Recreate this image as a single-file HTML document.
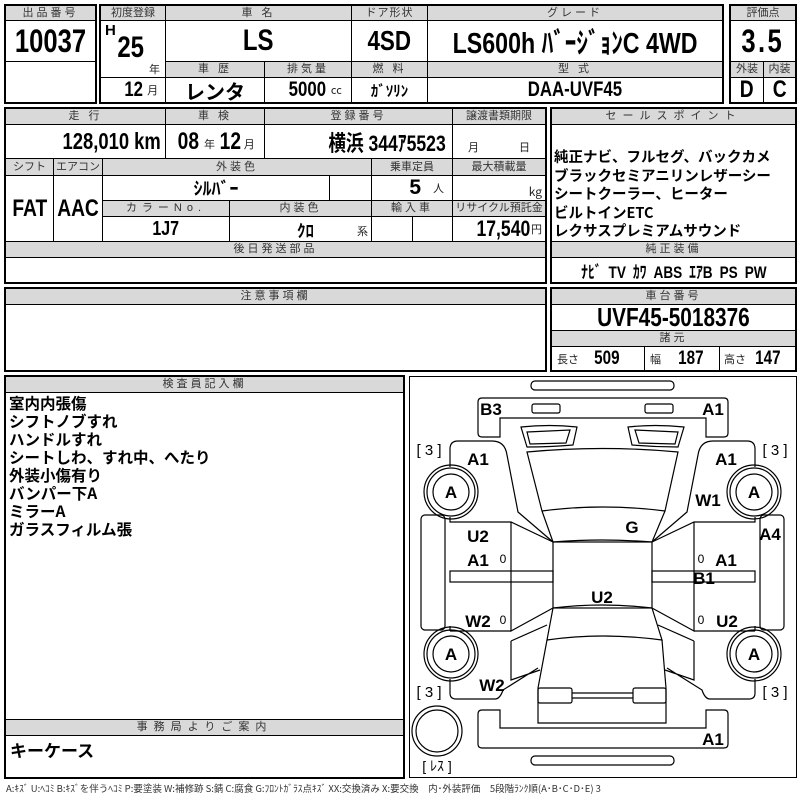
<!DOCTYPE html>
<html><head><meta charset="utf-8">
<style>
*{margin:0;padding:0;box-sizing:border-box}
body{width:800px;height:800px;background:#fff;position:relative;overflow:hidden;font-family:"Liberation Sans","Noto Sans CJK JP",sans-serif;color:#000}
.c{position:absolute;border:1px solid #000;display:flex;align-items:center;justify-content:center;white-space:nowrap;overflow:hidden}
.h{background:#d9d9d9;font-size:11px;color:#333;letter-spacing:3px;line-height:1}
.o{position:absolute;border:2px solid #000}
.b{font-family:"Liberation Sans Narrow","Liberation Sans","Noto Sans CJK JP",sans-serif;font-weight:bold}
.n{display:inline-block;transform:scaleX(.8)}
.r{transform-origin:right center}
.s{font-size:11px;font-weight:normal;color:#222;font-family:"Noto Sans CJK JP",sans-serif}
.t{position:absolute;white-space:nowrap}
</style></head><body>
<!-- Box 1 -->
<div class="c h" style="left:5px;top:5px;width:91px;height:16px">出品番号</div>
<div class="c b" style="left:5px;top:20px;width:91px;height:42px;font-size:32px"><span class="n">10037</span></div>
<div class="c" style="left:5px;top:61px;width:91px;height:42px"></div>
<div class="o" style="left:4px;top:4px;width:93px;height:100px"></div>

<!-- Box 2 -->
<div class="c h" style="left:100px;top:5px;width:66px;height:16px;letter-spacing:0">初度登録</div>
<div class="c h" style="left:165px;top:5px;width:187px;height:16px">車 名</div>
<div class="c h" style="left:351px;top:5px;width:77px;height:16px;letter-spacing:1px">ドア形状</div>
<div class="c h" style="left:427px;top:5px;width:296px;height:16px">グレード</div>
<div class="c" style="left:100px;top:20px;width:66px;height:58px"></div>
<div class="t b" style="left:105px;top:22px;font-size:15px">H</div>
<div class="t b" style="left:114px;top:31px;font-size:30px"><span class="n">25</span></div>
<div class="t s" style="left:149px;top:61px">年</div>
<div class="c b" style="left:165px;top:20px;width:187px;height:42px;font-size:30px"><span class="n">LS</span></div>
<div class="c b" style="left:351px;top:20px;width:77px;height:42px;font-size:28px"><span class="n">4SD</span></div>
<div class="c b" style="left:427px;top:20px;width:296px;height:42px;font-size:29px"><span class="n">LS600h ﾊﾞｰｼﾞｮﾝC 4WD</span></div>
<div class="c h" style="left:165px;top:61px;width:100px;height:17px">車 歴</div>
<div class="c h" style="left:264px;top:61px;width:88px;height:17px">排気量</div>
<div class="c h" style="left:351px;top:61px;width:77px;height:17px">燃 料</div>
<div class="c h" style="left:427px;top:61px;width:296px;height:17px">型 式</div>
<div class="c" style="left:100px;top:77px;width:66px;height:26px"><span class="b" style="font-size:21px;margin-left:14px"><span class="n">12</span></span><span class="s" style="margin-left:2px">月</span></div>
<div class="c b" style="left:165px;top:77px;width:100px;height:26px;font-size:20px">レンタ</div>
<div class="c" style="left:264px;top:77px;width:88px;height:26px"><span class="b" style="font-size:21px;margin-left:10px"><span class="n">5000</span></span><span class="s" style="margin-left:0">cc</span></div>
<div class="c b" style="left:351px;top:77px;width:77px;height:26px;font-size:15px">ｶﾞｿﾘﾝ</div>
<div class="c b" style="left:427px;top:77px;width:296px;height:26px;font-size:21px"><span class="n">DAA-UVF45</span></div>
<div class="o" style="left:99px;top:4px;width:625px;height:100px"></div>

<!-- Box 3 -->
<div class="c h" style="left:730px;top:5px;width:66px;height:16px;letter-spacing:0">評価点</div>
<div class="c b" style="left:730px;top:20px;width:66px;height:42px;font-size:32px"><span class="n" style="letter-spacing:3px">3.5</span></div>
<div class="c h" style="left:730px;top:61px;width:34px;height:17px;letter-spacing:0">外装</div>
<div class="c h" style="left:763px;top:61px;width:33px;height:17px;letter-spacing:0">内装</div>
<div class="c b" style="left:730px;top:77px;width:34px;height:26px;font-size:24px"><span class="n">D</span></div>
<div class="c b" style="left:763px;top:77px;width:33px;height:26px;font-size:24px"><span class="n">C</span></div>
<div class="o" style="left:729px;top:4px;width:68px;height:100px"></div>

<!-- Section 2 left -->
<div class="c h" style="left:5px;top:108px;width:161px;height:17px">走 行</div>
<div class="c h" style="left:165px;top:108px;width:100px;height:17px">車 検</div>
<div class="c h" style="left:264px;top:108px;width:189px;height:17px">登録番号</div>
<div class="c h" style="left:452px;top:108px;width:94px;height:17px;letter-spacing:0">譲渡書類期限</div>
<div class="c" style="left:5px;top:124px;width:161px;height:35px;justify-content:flex-end;padding-right:4px"><span class="b n r" style="font-size:23px">128,010 km</span></div>
<div class="c" style="left:165px;top:124px;width:100px;height:35px"><span class="b n" style="font-size:24px">08</span><span class="s" style="margin:4px 2px 0">年</span><span class="b n" style="font-size:24px">12</span><span class="s" style="margin-top:4px">月</span></div>
<div class="c" style="left:264px;top:124px;width:189px;height:35px;justify-content:flex-end;padding-right:6px"><span class="b n r" style="font-size:22px">横浜 344ｱ5523</span></div>
<div class="c" style="left:452px;top:124px;width:94px;height:35px;align-items:flex-end;padding-bottom:3px"><span class="s" style="margin-right:40px">月</span><span class="s">日</span></div>
<div class="c h" style="left:5px;top:158px;width:49px;height:18px;letter-spacing:0">シフト</div>
<div class="c h" style="left:53px;top:158px;width:50px;height:18px;letter-spacing:0">エアコン</div>
<div class="c h" style="left:102px;top:158px;width:270px;height:18px">外装色</div>
<div class="c h" style="left:371px;top:158px;width:82px;height:18px;letter-spacing:0">乗車定員</div>
<div class="c h" style="left:452px;top:158px;width:94px;height:18px;letter-spacing:0">最大積載量</div>
<div class="c b" style="left:5px;top:175px;width:49px;height:67px;font-size:24px"><span class="n">FAT</span></div>
<div class="c b" style="left:53px;top:175px;width:50px;height:67px;font-size:24px"><span class="n">AAC</span></div>
<div class="c b" style="left:102px;top:175px;width:228px;height:26px;font-size:18px">ｼﾙﾊﾞｰ</div>
<div class="c" style="left:329px;top:175px;width:43px;height:26px"></div>
<div class="c" style="left:371px;top:175px;width:82px;height:26px;justify-content:flex-end;padding-right:8px"><span class="b" style="font-size:21px">5</span><span class="s" style="margin-left:12px">人</span></div>
<div class="c" style="left:452px;top:175px;width:94px;height:26px;justify-content:flex-end;padding-right:3px;align-items:flex-end"><span class="s" style="font-size:12px">kg</span></div>
<div class="c h" style="left:102px;top:200px;width:128px;height:17px;letter-spacing:5px">カラーNo.</div>
<div class="c h" style="left:229px;top:200px;width:143px;height:17px">内装色</div>
<div class="c h" style="left:371px;top:200px;width:82px;height:17px">輸入車</div>
<div class="c h" style="left:452px;top:200px;width:94px;height:17px;letter-spacing:0">リサイクル預託金</div>
<div class="c b" style="left:102px;top:216px;width:128px;height:26px;font-size:20px"><span class="n">1J7</span></div>
<div class="c" style="left:229px;top:216px;width:143px;height:26px"><span class="b" style="font-size:17px;margin-left:10px">ｸﾛ</span><span class="t s" style="right:3px;bottom:2px">系</span></div>
<div class="c" style="left:371px;top:216px;width:42px;height:26px"></div>
<div class="c" style="left:412px;top:216px;width:41px;height:26px"></div>
<div class="c" style="left:452px;top:216px;width:94px;height:26px;justify-content:flex-end;padding-right:3px"><span class="b n r" style="font-size:22px">17,540</span><span class="s" style="margin-left:1px">円</span></div>
<div class="c h" style="left:5px;top:241px;width:541px;height:17px">後日発送部品</div>
<div class="c" style="left:5px;top:257px;width:541px;height:26px"></div>
<div class="o" style="left:4px;top:107px;width:543px;height:177px"></div>

<!-- Sales point -->
<div class="c h" style="left:551px;top:108px;width:245px;height:17px;letter-spacing:6px">セールスポイント</div>
<div class="c" style="left:551px;top:124px;width:245px;height:118px;display:block;padding:23px 0 0 2px;font-size:14.5px;font-weight:bold;line-height:18.5px;font-family:'Noto Sans CJK JP',sans-serif">純正ナビ、フルセグ、バックカメ<br>ブラックセミアニリンレザーシー<br>シートクーラー、ヒーター<br>ビルトインETC<br>レクサスプレミアムサウンド</div>
<div class="c h" style="left:551px;top:241px;width:245px;height:17px">純正装備</div>
<div class="c b" style="left:551px;top:257px;width:245px;height:26px;font-size:17px;word-spacing:4px"><span class="n">ﾅﾋﾞ TV ｶﾜ ABS ｴｱB PS PW</span></div>
<div class="o" style="left:550px;top:107px;width:247px;height:177px"></div>

<!-- Section 3 -->
<div class="c h" style="left:5px;top:288px;width:541px;height:17px">注意事項欄</div>
<div class="c" style="left:5px;top:304px;width:541px;height:67px"></div>
<div class="o" style="left:4px;top:287px;width:543px;height:85px"></div>

<div class="c h" style="left:551px;top:288px;width:245px;height:17px">車台番号</div>
<div class="c b" style="left:551px;top:304px;width:245px;height:27px;font-size:26px"><span class="n">UVF45-5018376</span></div>
<div class="c h" style="left:551px;top:330px;width:245px;height:17px">諸元</div>
<div class="c" style="left:551px;top:346px;width:94px;height:25px;justify-content:flex-start;padding-left:5px"><span class="s">長さ</span><span class="b n" style="font-size:19px;margin-left:12px">509</span></div>
<div class="c" style="left:644px;top:346px;width:76px;height:25px;justify-content:flex-start;padding-left:5px"><span class="s">幅</span><span class="b n" style="font-size:19px;margin-left:14px">187</span></div>
<div class="c" style="left:719px;top:346px;width:77px;height:25px;justify-content:flex-start;padding-left:4px"><span class="s">高さ</span><span class="b n" style="font-size:19px;margin-left:6px">147</span></div>
<div class="o" style="left:550px;top:287px;width:247px;height:85px"></div>

<!-- Inspector box -->
<div class="c h" style="left:5px;top:376px;width:399px;height:17px">検査員記入欄</div>
<div class="c" style="left:5px;top:392px;width:399px;height:328px;display:block;padding:1px 0 0 3px;font-size:15.5px;font-weight:bold;line-height:18px;font-family:'Noto Sans CJK JP',sans-serif">室内内張傷<br>シフトノブすれ<br>ハンドルすれ<br>シートしわ、すれ中、へたり<br>外装小傷有り<br>バンパー下A<br>ミラーA<br>ガラスフィルム張</div>
<div class="c h" style="left:5px;top:719px;width:399px;height:17px;letter-spacing:6px">事務局よりご案内</div>
<div class="c" style="left:5px;top:735px;width:399px;height:43px;display:block;padding:1px 0 0 4px;font-size:17px;font-weight:bold;font-family:'Noto Sans CJK JP',sans-serif">キーケース</div>
<div class="o" style="left:4px;top:375px;width:401px;height:404px"></div>

<!-- Diagram -->
<div class="o" style="left:409px;top:376px;width:388px;height:402px;border-width:1px"></div>
<svg style="position:absolute;left:0;top:0" width="800" height="800" viewBox="0 0 800 800" fill="none" stroke="#000" stroke-width="1.2">
<rect x="531" y="381" width="143" height="9" rx="4"/>
<rect x="531" y="756" width="143" height="9" rx="4"/>
<path d="M482,398 L724,398 Q728,398 728,402 L728,433 Q728,437 724,437 L706,437 L706,418 L500,418 L500,437 L482,437 Q478,437 478,433 L478,402 Q478,398 482,398Z"/>
<rect x="532" y="404" width="28" height="9" rx="2"/>
<rect x="645" y="404" width="28" height="9" rx="2"/>
<path d="M482,748 L724,748 Q728,748 728,744 L728,714 Q728,710 724,710 L706,710 L706,728 L500,728 L500,710 L482,710 Q478,710 478,714 L478,744 Q478,748 482,748Z"/>
<path d="M521,427 Q550,424 577,427 L573,445 Q550,447 527,447 Z M527,432 L570,430 L566,443 L530,444 Z"/>
<path d="M684,427 Q655,424 628,427 L632,445 Q655,447 678,447 Z M678,432 L635,430 L639,443 L675,444 Z"/>
<path d="M527,452 Q602,445 678,452 L665,511 Q602,503 542,511 Z"/>
<path d="M542,511 L553,542 Q602,538 652,542 L665,511"/>
<rect x="553" y="542" width="99" height="66"/>
<path d="M553,608 Q602,602 652,608 L662,640 Q602,632 547,640 Z"/>
<path d="M547,640 L538,688 L538,723 L666,723 L666,688 L662,640"/>
<rect x="538" y="688" width="34" height="15" rx="2"/>
<rect x="633" y="688" width="33" height="15" rx="2"/>
<path d="M572,693 L633,693 M572,698 L633,698"/>
<path d="M553,542 L518,512 L507,455 Q505,441 492,441 L458,441 Q450,441 450,449 L450,467"/>
<path d="M450,517 L450,522 L511,522 L553,542 M511,522 L511,631 L553,608 M450,631 L511,631 M450,626 L450,631"/>
<rect x="450" y="571" width="103" height="11"/>
<rect x="421" y="515" width="24" height="115" rx="4"/>
<path d="M450,679 L450,693 Q450,699 456,699 L495,699 Q500,699 503,690 L538,668 M511,641 L511,680 L540,670 M511,641 L547,625"/>
<path d="M652,542 L687,512 L698,455 Q700,441 713,441 L747,441 Q755,441 755,449 L755,467"/>
<path d="M755,517 L755,522 L694,522 L652,542 M694,522 L694,631 L652,608 M755,631 L694,631 M755,626 L755,631"/>
<rect x="652" y="571" width="103" height="11"/>
<rect x="760" y="515" width="24" height="115" rx="4"/>
<path d="M755,679 L755,693 Q755,699 749,699 L710,699 Q705,699 702,690 L667,668 M694,641 L694,680 L665,670 M694,641 L658,625"/>
<g><circle cx="451" cy="492" r="27"/><circle cx="451" cy="492" r="24"/><circle cx="451" cy="492" r="18"/></g>
<g><circle cx="754" cy="492" r="27"/><circle cx="754" cy="492" r="24"/><circle cx="754" cy="492" r="18"/></g>
<g><circle cx="451" cy="654" r="27"/><circle cx="451" cy="654" r="24"/><circle cx="451" cy="654" r="18"/></g>
<g><circle cx="754" cy="654" r="27"/><circle cx="754" cy="654" r="24"/><circle cx="754" cy="654" r="18"/></g>
<circle cx="437" cy="731" r="25"/><circle cx="437" cy="731" r="21"/>
<g fill="#000" stroke="none" font-family="Liberation Sans, sans-serif" font-weight="bold" font-size="17" text-anchor="middle">
<text x="491" y="415">B3</text><text x="713" y="415">A1</text>
<text x="478" y="465">A1</text><text x="726" y="465">A1</text>
<text x="451" y="498">A</text><text x="754" y="498">A</text>
<text x="708" y="506">W1</text><text x="632" y="533">G</text>
<text x="478" y="542">U2</text><text x="770" y="540">A4</text>
<text x="478" y="566">A1</text><text x="726" y="566">A1</text>
<text x="704" y="584">B1</text><text x="602" y="603">U2</text>
<text x="478" y="627">W2</text><text x="727" y="627">U2</text>
<text x="451" y="660">A</text><text x="754" y="660">A</text>
<text x="492" y="691">W2</text><text x="713" y="745">A1</text>
<g font-size="12" font-weight="normal"><text x="503" y="563">0</text><text x="701" y="563">0</text><text x="503" y="624">0</text><text x="701" y="624">0</text></g>
<g font-size="15" font-weight="normal"><text x="429" y="455">[ 3 ]</text><text x="775" y="455">[ 3 ]</text><text x="429" y="697">[ 3 ]</text><text x="775" y="697">[ 3 ]</text></g>
<text x="437" y="771" font-size="14" font-weight="normal">[ ﾚｽ ]</text>
</g>
</svg>
<div class="t" style="left:6px;top:781px;font-size:9.5px;color:#333;font-family:'Noto Sans CJK JP',sans-serif">A:ｷｽﾞ U:ﾍｺﾐ B:ｷｽﾞを伴うﾍｺﾐ P:要塗装 W:補修跡 S:錆 C:腐食 G:ﾌﾛﾝﾄｶﾞﾗｽ点ｷｽﾞ XX:交換済み X:要交換　内･外装評価　5段階ﾗﾝｸ順(A･B･C･D･E) 3</div>
</body></html>
